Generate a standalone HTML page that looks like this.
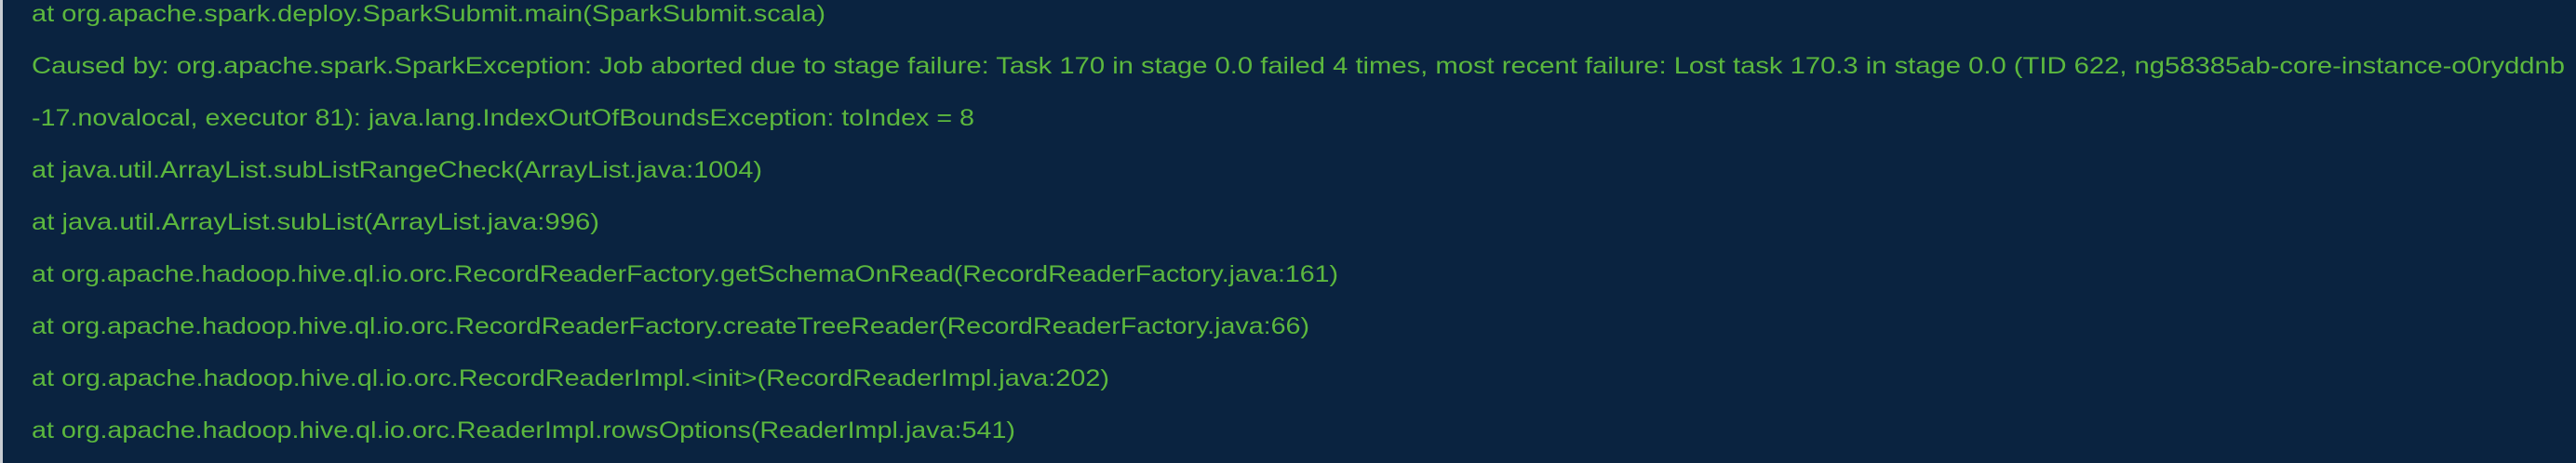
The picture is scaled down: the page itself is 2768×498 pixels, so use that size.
<!DOCTYPE html>
<html><head><meta charset="utf-8"><style>
html,body{margin:0;padding:0;background:#0a2340;}
body{width:2768px;height:498px;overflow:hidden;position:relative;}
.edge{position:absolute;left:0;top:0;width:3px;height:498px;background:#c8ccd2;}
svg{position:absolute;left:0;top:0;}
text{font-family:"Liberation Sans",sans-serif;font-size:25px;fill:#5cb83e;}
</style></head><body>
<div class="edge"></div>
<svg width="2768" height="498">
<text x="34" y="23" textLength="853" lengthAdjust="spacingAndGlyphs">at org.apache.spark.deploy.SparkSubmit.main(SparkSubmit.scala)</text>
<text x="34" y="79" textLength="2722" lengthAdjust="spacingAndGlyphs">Caused by: org.apache.spark.SparkException: Job aborted due to stage failure: Task 170 in stage 0.0 failed 4 times, most recent failure: Lost task 170.3 in stage 0.0 (TID 622, ng58385ab-core-instance-o0ryddnb</text>
<text x="34" y="135" textLength="1013" lengthAdjust="spacingAndGlyphs">-17.novalocal, executor 81): java.lang.IndexOutOfBoundsException: toIndex = 8</text>
<text x="34" y="191" textLength="785" lengthAdjust="spacingAndGlyphs">at java.util.ArrayList.subListRangeCheck(ArrayList.java:1004)</text>
<text x="34" y="247" textLength="610" lengthAdjust="spacingAndGlyphs">at java.util.ArrayList.subList(ArrayList.java:996)</text>
<text x="34" y="303" textLength="1404" lengthAdjust="spacingAndGlyphs">at org.apache.hadoop.hive.ql.io.orc.RecordReaderFactory.getSchemaOnRead(RecordReaderFactory.java:161)</text>
<text x="34" y="359" textLength="1373" lengthAdjust="spacingAndGlyphs">at org.apache.hadoop.hive.ql.io.orc.RecordReaderFactory.createTreeReader(RecordReaderFactory.java:66)</text>
<text x="34" y="415" textLength="1158" lengthAdjust="spacingAndGlyphs">at org.apache.hadoop.hive.ql.io.orc.RecordReaderImpl.&lt;init&gt;(RecordReaderImpl.java:202)</text>
<text x="34" y="471" textLength="1057" lengthAdjust="spacingAndGlyphs">at org.apache.hadoop.hive.ql.io.orc.ReaderImpl.rowsOptions(ReaderImpl.java:541)</text>
</svg>
</body></html>
